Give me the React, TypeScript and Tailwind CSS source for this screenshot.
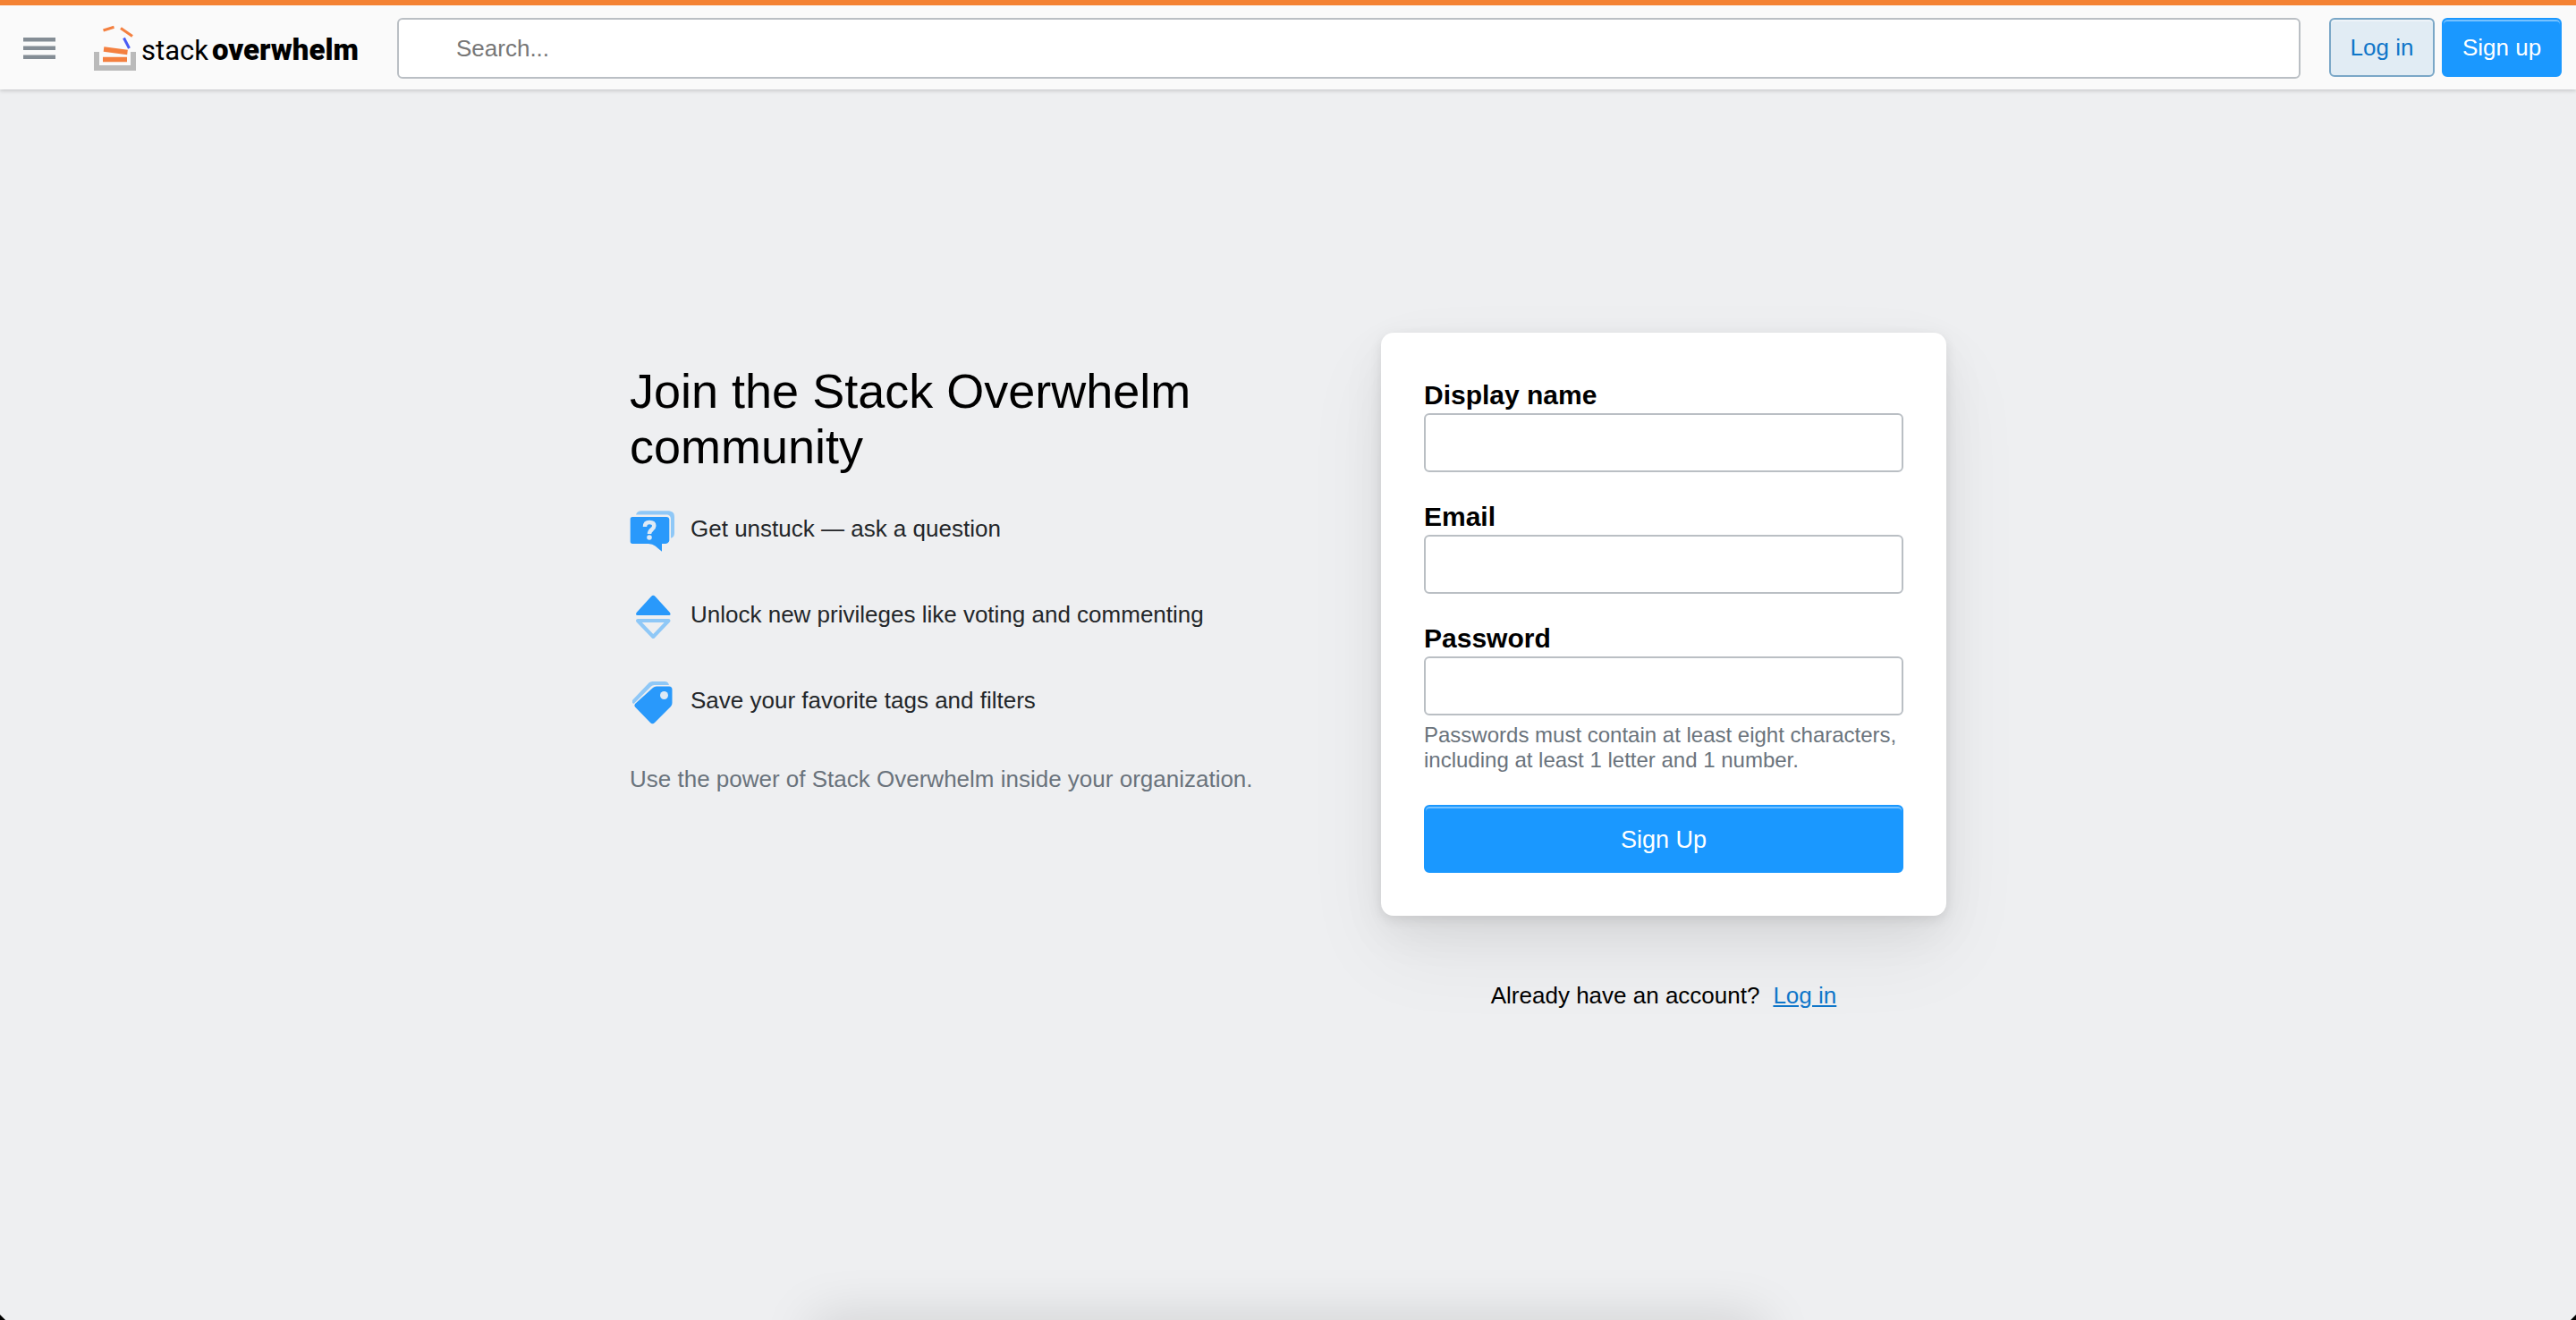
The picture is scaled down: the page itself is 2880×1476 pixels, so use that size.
import React from "react";

const LINK = "#";

function MenuIcon() {
  return (
    <svg width="36" height="24" viewBox="0 0 36 24" fill="#848d95" aria-hidden="true">
      <rect y="0" width="36" height="4.5" />
      <rect y="9.5" width="36" height="4.5" />
      <rect y="19.5" width="36" height="4.5" />
    </svg>
  );
}

function LogoMark() {
  return (
    <svg width="48" height="52" viewBox="0 0 48 52" fill="none" aria-hidden="true" className="shrink-0">
      <path d="M3 30v18h41V30" stroke="#bababa" strokeWidth="6" />
      <path d="M10 38.5h27" stroke="#f48040" strokeWidth="5.5" />
      <path d="M11 27l26.500 3.500" stroke="#f48040" strokeWidth="5.500" />
      <path d="M10.500 6l12-3.700" stroke="#f48040" strokeWidth="3" />
      <path d="M30 3.500l13 9" stroke="#f48040" strokeWidth="3" />
      <path d="M33.500 14.500l6 11.500" stroke="#4a5cf5" strokeWidth="3" />
    </svg>
  );
}

function QuestionIcon() {
  return (
    <svg width="52" height="52" viewBox="0 0 52 52" aria-hidden="true" className="shrink-0">
      <path d="M7 7.500c1-3 3-4.200 6-4.200h29c6 0 8 2 8 7v17c0 4-1 5.500-4 6.500V13c0-4-2-5.500-5-5.500z" fill="#8fc8f7" />
      <path d="M3 10h38c2 0 3.300 1.300 3.300 3v23c0 2.500-2.500 4-5 4H36v8.800L28.500 42.500Q25.500 40 21 40H3C1.500 40 .7 39 .7 37.500v-25C.7 11 1.500 10 3 10z" fill="#2999fb" />
      <path d="M17 21c0-3.600 2-5 5-5 3.500 0 5.300 1.400 5.300 4 0 4-5.300 4-5.300 9" fill="none" stroke="#deeaf5" strokeWidth="4.500" />
      <circle cx="22" cy="33" r="2.800" fill="#deeaf5" />
    </svg>
  );
}

function VoteIcon() {
  return (
    <svg width="52" height="52" viewBox="0 0 52 52" aria-hidden="true" className="shrink-0">
      <path d="M24 3q2.300-2.500 4.600 0L45 21q1.500 3-1 3H8.600q-2.500 0-1-3z" fill="#2999fb" />
      <path d="M9 30h34.500L26.300 48z" fill="none" stroke="#8fc8f7" strokeWidth="4" strokeLinejoin="round" />
    </svg>
  );
}

function TagIcon() {
  return (
    <svg width="52" height="52" viewBox="0 0 52 52" aria-hidden="true" className="shrink-0">
      <path d="M3 26v-3L21.500 3.600q1.500-1.600 4-1.600h14q3.500 0 4.500 4H27.500q-2 0-3.500 1.500L4.500 27z" fill="#8fc8f7" />
      <path d="M26 9q1.500-1.500 4-1.500h14q3.500 0 3.500 3.500v15q0 2.500-1.500 4L28 48q-2.500 2.500-5 0L6 30.500q-1.500-1.500 0-3.500z" fill="#2999fb" />
      <circle cx="38.500" cy="17.500" r="4.500" fill="#dde9f5" />
    </svg>
  );
}

const benefits = [
  { icon: <QuestionIcon />, text: "Get unstuck — ask a question" },
  { icon: <VoteIcon />, text: "Unlock new privileges like voting and commenting" },
  { icon: <TagIcon />, text: "Save your favorite tags and filters" },
];

function Field({ id, label, type }: { id: string; label: string; type: string }) {
  return (
    <div className="flex flex-col">
      <label htmlFor={id} className="pt-0.5 text-[30px] leading-[40px] font-bold">
        {label}
      </label>
      <input id={id} type={type} className="h-[66px] w-full rounded-[6px] border-2 border-[#babfc4] bg-white px-4 text-[26px]" />
    </div>
  );
}

export default function App() {
  return (
    <div className="relative flex min-h-screen flex-col overflow-hidden bg-[#eeeff1] font-['Liberation_Sans',Arial,sans-serif] text-[26px] leading-[30px] text-black">
      <header className="flex h-[100px] items-start border-t-[6px] border-[#f48233] bg-[#fafafa] pr-4 pl-[26px] shadow-[0_2px_4px_rgba(0,0,0,0.15)]">
        <button type="button" aria-label="Menu" className="mt-9">
          <MenuIcon />
        </button>
        <a href={LINK} className="mt-[22px] ml-[43px] flex w-[339px] gap-[5px]">
          <LogoMark />
          <span className="flex items-baseline gap-1 font-[Roboto,sans-serif] leading-[56px]">
            <span className="text-[31px]">stack</span>
            <span className="text-[33px] font-black">overwhelm</span>
          </span>
        </a>
        <input
          type="search"
          aria-label="Search"
          placeholder="Search..."
          className="mt-[14px] h-[68px] min-w-0 flex-1 rounded-[6px] border-2 border-[#babfc4] bg-white pr-4 pl-16 placeholder:text-[#777777]"
        />
        <a href={LINK} className="mt-[14px] ml-8 flex h-[66px] w-[118px] items-center justify-center rounded-[6px] border-2 border-[#7aa7c7] bg-[#e1ecf4] text-[#0f76c9] shadow-[inset_0_2px_0_rgba(255,255,255,0.4)]">
          Log in
        </a>
        <a href={LINK} className="mt-[14px] ml-2 flex h-[66px] w-[134px] items-center justify-center rounded-[6px] border-2 border-[#1a98ff] bg-[#1a98ff] text-white shadow-[inset_0_2px_0_rgba(255,255,255,0.4)]">
          Sign up
        </a>
      </header>

      <main className="mx-auto flex w-full max-w-[1472px] flex-1 items-start gap-[140px] pt-[272px]">
        <section className="flex min-w-0 flex-1 flex-col pt-[34px]">
          <h1 className="text-[54px] leading-[62px]">Join the Stack Overwhelm community</h1>
          <ul className="mt-[38px] flex flex-col gap-11">
            {benefits.map((b) => (
              <li key={b.text} className="flex gap-4 leading-[46px] text-[#232629]">
                {b.icon}
                <span>{b.text}</span>
              </li>
            ))}
          </ul>
          <p className="mt-11 text-[#6a737c]">Use the power of Stack Overwhelm inside your organization.</p>
        </section>

        <section className="flex w-[632px] shrink-0 flex-col items-center">
          <form className="flex w-full flex-col rounded-[14px] bg-white p-12 shadow-[0_20px_50px_rgba(0,0,0,0.06),0_40px_96px_rgba(0,0,0,0.06),0_4px_14px_rgba(0,0,0,0.09)]">
            <div className="flex flex-col gap-7">
              <Field id="display-name" label="Display name" type="text" />
              <Field id="email" label="Email" type="email" />
              <Field id="password" label="Password" type="password" />
            </div>
            <p className="mt-2 text-[24px] leading-[28px] text-[#6a737c]">
              Passwords must contain at least eight characters, including at least 1 letter and 1 number.
            </p>
            <button type="button" className="mt-9 h-[76px] rounded-[6px] border-2 border-[#1a98ff] bg-[#1a98ff] pt-0.5 text-[27px] text-white shadow-[inset_0_2px_0_rgba(255,255,255,0.4)]">
              Sign Up
            </button>
          </form>
          <p className="mt-[74px] flex gap-[15px]">
            Already have an account?
            <a href={LINK} className="text-[#0f76c9] underline">
              Log in
            </a>
          </p>
        </section>
      </main>

      <div className="mx-auto -mb-2 h-2 w-[1020px] shadow-[0_20px_60px_20px_rgba(0,0,0,0.15)]" />
      <div className="absolute bottom-0 left-0 size-[6px] bg-black [clip-path:polygon(0_0,100%_100%,0_100%)]" />
      <div className="absolute right-0 bottom-0 size-[6px] bg-black [clip-path:polygon(100%_0,100%_100%,0_100%)]" />
    </div>
  );
}
